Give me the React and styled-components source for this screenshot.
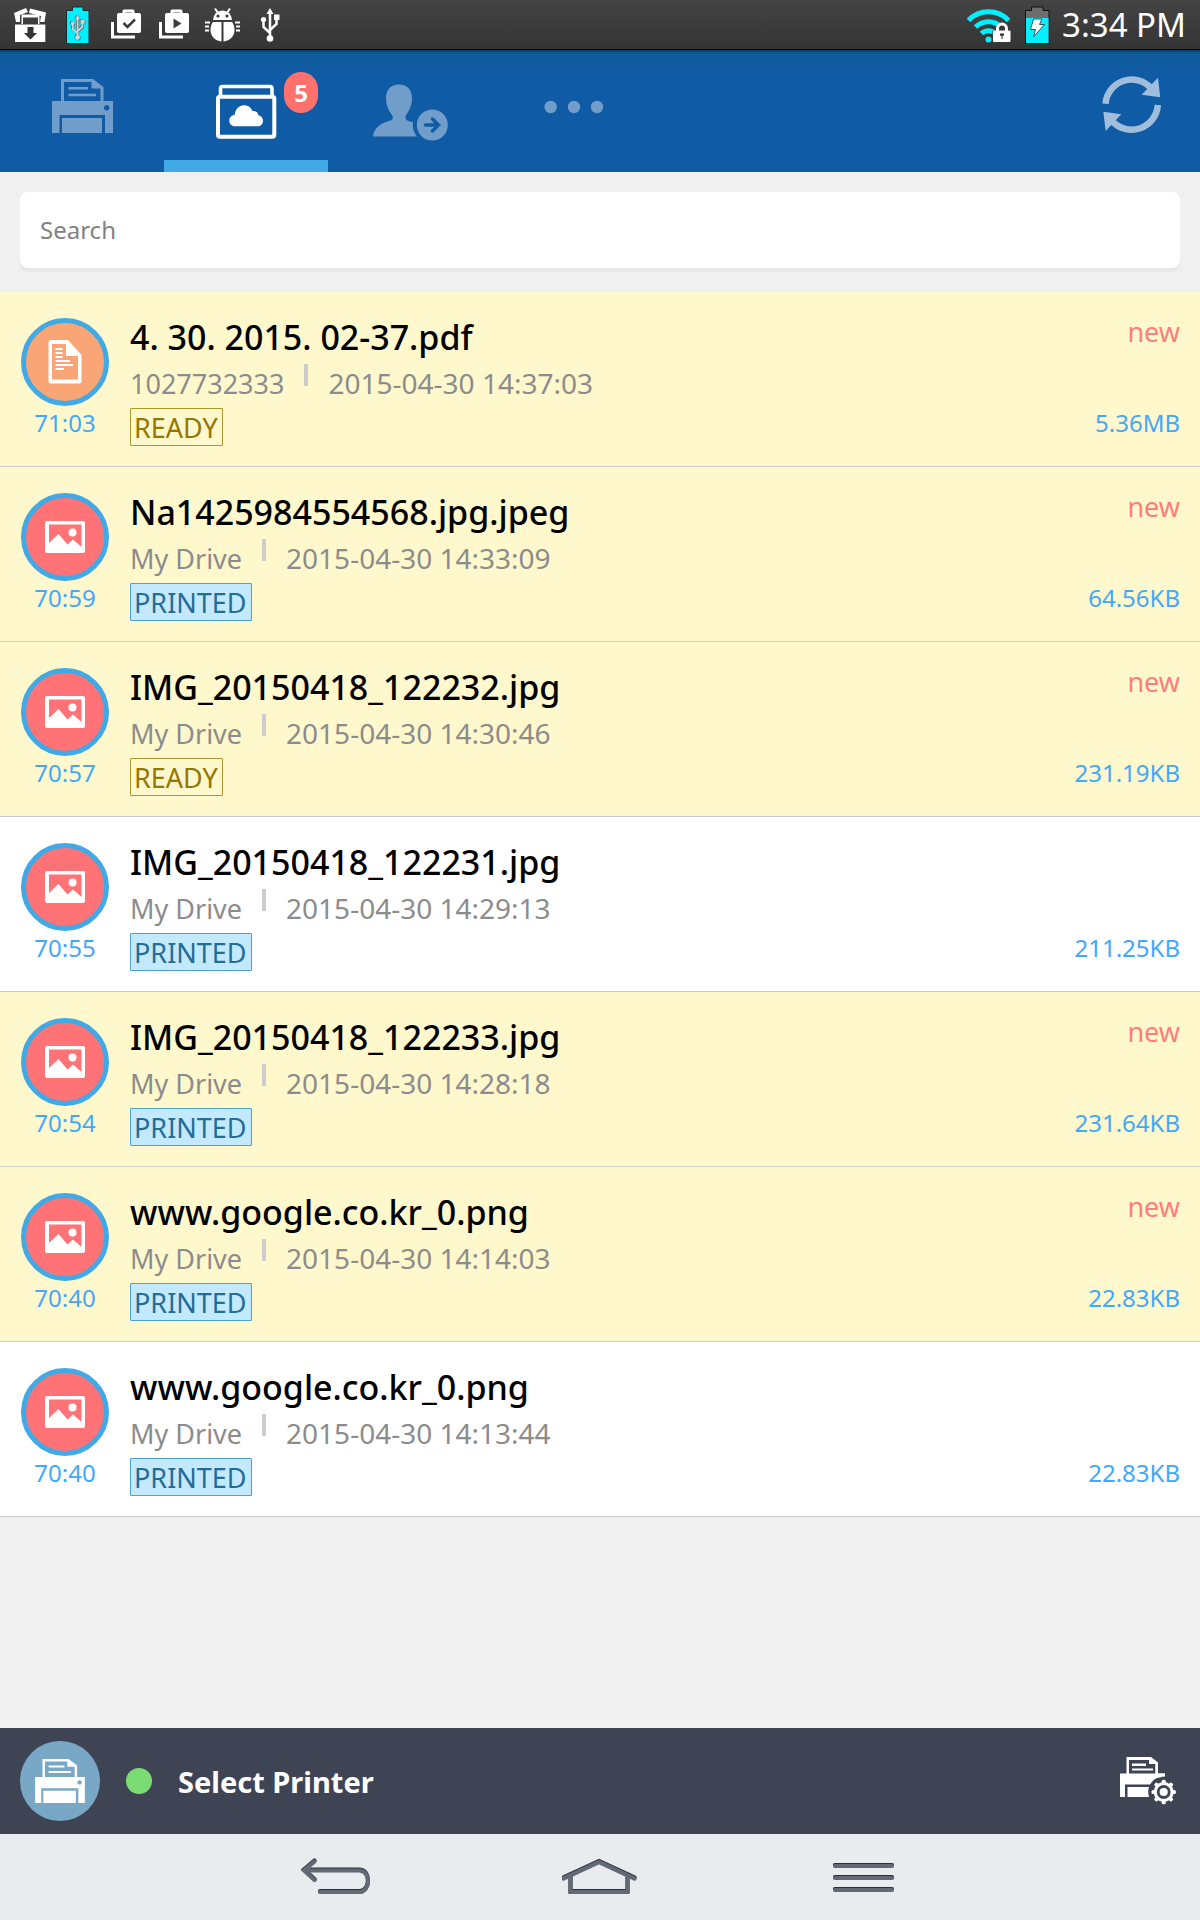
import styled, { createGlobalStyle } from "styled-components";

const GlobalStyle = createGlobalStyle`
  * {
    box-sizing: border-box;
  }
  body {
    margin: 0;
    background: #f0f0f0;
    font-family: "Noto Sans", "Open Sans", sans-serif;
  }
  button {
    padding: 0;
    border: none;
    background: none;
    font-family: inherit;
    cursor: pointer;
  }
  svg {
    display: block;
  }
`;

const Page = styled.div`
  display: flex;
  flex-direction: column;
  min-height: 100vh;
`;

const StatusBar = styled.div`
  display: flex;
  justify-content: space-between;
  align-items: flex-start;
  height: 50px;
  padding: 0 14px 0 6px;
  background: linear-gradient(#444444, #343434);
  border-bottom: 1px solid #000000;
  color: #ffffff;
`;

const StatusGroup = styled.div`
  display: flex;
  gap: ${(props) => props.$gap || 0};
`;

const Clock = styled.time`
  font-size: 33px;
  line-height: 50px;
`;

const Header = styled.header`
  display: flex;
  justify-content: space-between;
  height: 122px;
  background: linear-gradient(#0b3f70, #105a9c 4px, #105ba5 24px);
`;

const Tabs = styled.nav`
  display: flex;
`;

const Tab = styled.button`
  position: relative;
  display: flex;
  align-items: center;
  justify-content: center;
  width: 164px;
  padding-top: 2px;
  color: ${(props) => (props.$active ? "#ffffff" : "#709dc9")};
  box-shadow: ${(props) => (props.$active ? "inset 0 -12px #40a9e6" : "none")};
`;

const Count = styled.span`
  position: absolute;
  top: 22px;
  right: 10px;
  width: 34px;
  border-radius: 17px;
  background: #ff716c;
  color: #ffffff;
  font-size: 24px;
  font-weight: 700;
  line-height: 41px;
  text-align: center;
`;

const RefreshButton = styled.button`
  padding: 0 38px 12px;
  color: #a0bedb;
`;

const SearchArea = styled.div`
  padding: 20px 20px 24px;
`;

const SearchInput = styled.input`
  display: block;
  width: 100%;
  height: 76px;
  padding: 0 20px 2px;
  border: none;
  border-radius: 8px;
  outline: none;
  background: #ffffff;
  box-shadow: 0 4px #e8e8e8;
  color: #000000;
  font-family: inherit;
  font-size: 24px;
  &::placeholder {
    color: #828282;
    opacity: 1;
  }
`;

const List = styled.ul`
  flex: 1;
  margin: 0;
  padding: 0;
  list-style: none;
`;

const Row = styled.li`
  display: flex;
  gap: 20px;
  padding: 0 20px;
  border-bottom: 1px solid #cccccc;
  background: ${(props) => (props.$unread ? "#fff8cc" : "#ffffff")};
`;

const AvatarColumn = styled.div`
  display: flex;
  flex-direction: column;
  align-items: center;
  gap: 2px;
  width: 90px;
  padding-top: 26px;
`;

const Avatar = styled.div`
  display: flex;
  align-items: center;
  justify-content: center;
  width: 88px;
  height: 88px;
  border: 5px solid #40a9e6;
  border-radius: 50%;
  background: ${(props) => (props.$type === "doc" ? "#f9a575" : "#ff7376")};
`;

const BlueText = styled.span`
  color: #42a8fa;
  font-size: 24px;
  line-height: 30px;
`;

const Info = styled.div`
  flex: 1;
  min-width: 0;
  padding: 22px 0 20px;
`;

const FileName = styled.h2`
  margin: 0 0 4px;
  color: #000000;
  font-size: 34px;
  font-weight: 500;
  line-height: 46px;
`;

const Meta = styled.div`
  display: flex;
  align-items: baseline;
  height: 38px;
  margin-bottom: 6px;
  color: #8c8c8c;
  font-size: 28px;
  line-height: 38px;
`;

const Owner = styled.span`
  font-size: 27px;
`;

const Separator = styled.span`
  align-self: flex-start;
  width: 4px;
  height: 22px;
  margin: 0 20px;
  background: #cccccc;
`;

const Status = styled.span`
  display: block;
  width: fit-content;
  padding: 2px 4px 0 3px;
  border: 1px solid ${(props) => (props.$printed ? "#4ba3d3" : "#ad9428")};
  border-radius: 1px;
  background: ${(props) => (props.$printed ? "#c3e9ff" : "#fff8cc")};
  color: ${(props) => (props.$printed ? "#236d99" : "#957600")};
  font-size: 27px;
  line-height: 34px;
`;

const Side = styled.div`
  display: flex;
  flex-direction: column;
  align-items: flex-end;
  justify-content: space-between;
  padding: 22px 0 28px;
`;

const NewLabel = styled.span`
  color: #ff7d7d;
  font-size: 27px;
  line-height: 36px;
`;

const Footer = styled.footer`
  display: flex;
  align-items: center;
  justify-content: space-between;
  height: 106px;
  padding: 0 24px 0 20px;
  background: #3f4454;
  color: #ffffff;
`;

const PrinterButton = styled.button`
  display: flex;
  align-items: center;
  gap: 26px;
  color: #ffffff;
  font-size: 29px;
  font-weight: 700;
`;

const PrinterBadge = styled.span`
  display: flex;
  align-items: center;
  justify-content: center;
  width: 80px;
  height: 80px;
  border-radius: 50%;
  background: #78a8c6;
`;

const OnlineDot = styled.span`
  width: 26px;
  height: 26px;
  border-radius: 50%;
  background: #7adc72;
`;

const SettingsButton = styled.button`
  color: #ffffff;
`;

const SystemNav = styled.nav`
  display: flex;
  justify-content: center;
  height: 86px;
  background: #e8ecef;
`;

const SystemButton = styled.button`
  display: flex;
  align-items: center;
  justify-content: center;
  width: 22%;
  color: #636975;
`;

const DownloadBoxIcon = () => (
  <svg width="48" height="48" viewBox="0 0 48 48" fill="#fff">
    <path d="M8 13L20 8L22 12L14 15V22H10Z" />
    <path d="M24 8.500L40 12.500L38.500 22H34L35 16L23 13Z" />
    <path d="M15.500 14.500H33.500V24H32V17.500H17V24H15.500Z" />
    <path d="M9 24.500H39.300V42H9Z" />
    <path d="M21.500 27H27.500V33H31L24.500 39.500L18 33H21.500Z" fill="#333" />
  </svg>
);

const UsbShape = () => (
  <g fill="none" stroke="currentColor" strokeWidth="2.500">
    <path d="M24 12V37M24 33L17.500 27V20M24 30L30.500 24V18" />
    <path d="M24 8L27.500 14H20.500Z" fill="currentColor" stroke="none" />
    <circle cx="24" cy="38.500" r="3.300" fill="currentColor" stroke="none" />
    <circle cx="17.500" cy="19.500" r="2.600" fill="currentColor" stroke="none" />
    <path d="M28 14.500H33.500V20H28Z" fill="currentColor" stroke="none" />
  </g>
);

const BatteryUsbIcon = () => (
  <svg width="48" height="48" viewBox="0 0 48 48">
    <path
      d="M12.500 10.500H18.500V7H29V10.500H35V43.500H12.500Z"
      fill="#00f0ff"
      stroke="#1d2b2d"
    />
    <g transform="translate(6.500 9.500) scale(.74)" color="#3c6672">
      <UsbShape />
    </g>
    <g transform="translate(5 8.500) scale(.74)" color="#3c6672">
      <UsbShape />
    </g>
    <g transform="translate(5.800 9) scale(.74)" color="#c9d6da">
      <UsbShape />
    </g>
  </svg>
);

const BagIcon = ({ children }) => (
  <svg width="48" height="48" viewBox="0 0 48 48" fill="none">
    <path d="M10.500 22V37H33" stroke="#fff" strokeWidth="3" />
    <path d="M22 14V11H31V14" stroke="#fff" strokeWidth="3" strokeLinejoin="round" />
    <rect x="15" y="13" width="24" height="20" rx="2" fill="#fff" />
    {children}
  </svg>
);

const BugIcon = () => (
  <svg width="48" height="48" viewBox="0 0 48 48" fill="#fff">
    <path d="M15 20A9.500 9.500 0 0 1 34 20Z" />
    <path d="M17 8.500L20 13M32 8.500L29 13" stroke="#fff" strokeWidth="2" />
    <circle cx="20" cy="16" r="1.600" fill="#3c3c3c" />
    <circle cx="29" cy="16" r="1.600" fill="#3c3c3c" />
    <path d="M23.500 22V41.500C17 41 12.500 36 12.500 30C12.500 26.500 13.500 24 15 22Z" />
    <path d="M25.500 22V41.500C32 41 36.500 36 36.500 30C36.500 26.500 35.500 24 34 22Z" />
    <path
      d="M7 22.500H12M7 26.500H11M7 30.500H11M37 22.500H42M38 26.500H42M38 30.500H42"
      stroke="#fff"
      strokeWidth="2"
    />
  </svg>
);

const UsbIcon = () => (
  <svg width="48" height="48" viewBox="0 0 48 48" color="#fff">
    <UsbShape />
  </svg>
);

const WifiIcon = () => (
  <svg width="48" height="48" viewBox="0 0 48 48" fill="none">
    <g stroke="#00f0ff" strokeWidth="5">
      <path d="M4.500 20.500A27.500 27.500 0 0 1 44.500 20.500" />
      <path d="M11.500 27A18.500 18.500 0 0 1 37.500 27" />
      <path d="M17.500 33.500A10 10 0 0 1 31.500 33.500" />
    </g>
    <circle cx="24.500" cy="39.500" r="3" fill="#00f0ff" />
    <path d="M28.500 30.500V42.500H47V29L43 24H35L32 27V30.500Z" fill="#3a3a3a" />
    <path d="M33.500 32V28.500A4.500 4.500 0 0 1 42.500 28.500V32" stroke="#fff" strokeWidth="3" />
    <rect x="29" y="30.500" width="17.500" height="11.500" rx="1" fill="#fff" />
    <path d="M36 33.500H40V35.500L38.500 36V39H37.500V36L36 35.500Z" fill="#333" />
  </svg>
);

const BatteryChargeIcon = () => (
  <svg width="26" height="48" viewBox="0 0 26 48">
    <path d="M1.500 10.500H7.500V7H19V10.500H25V43.500H1.500Z" fill="#6e6e6e" stroke="#111" />
    <path d="M2 18H24.500V43H2Z" fill="#00f0ff" />
    <path
      d="M9.500 19H18L15.500 24.500H20.500L9.500 37L11.500 29.500H6.500Z"
      fill="#fff"
      stroke="#235a60"
      strokeWidth="1"
    />
  </svg>
);

const PrinterShape = () => (
  <g fill="currentColor">
    <path
      fillRule="evenodd"
      d="M9 0H41L51.500 8V22H61V54H53V36H7.500V54H0V22H9ZM12 3V22H48.500V9.500H39.500V3Z"
    />
    <path d="M16.500 8H36V10.500H16.500ZM16.500 14.700H44V17.200H16.500ZM10 39H50V54H10Z" />
  </g>
);

const PrinterIcon = ({ width, height, hole }) => (
  <svg width={width} height={height} viewBox="0 0 61 54">
    <PrinterShape />
    <circle cx="54.500" cy="28.700" r="2.700" fill={hole} />
  </svg>
);

const PrintTabIcon = () => (
  <svg width="76" height="66" viewBox="0 0 76 66">
    <g transform="translate(8 0)">
      <PrinterShape />
      <circle cx="54.700" cy="28.700" r="2.700" fill="#105ba5" />
    </g>
  </svg>
);

const CloudTabIcon = () => (
  <svg width="76" height="66" viewBox="0 0 76 66" fill="none" stroke="currentColor">
    <path d="M12.500 17V9.500Q12.500 7.500 14.500 7.500H62Q64 7.500 64 9.500V17" strokeWidth="3.600" />
    <rect x="10" y="17.800" width="56.300" height="40" rx="2" strokeWidth="4" />
    <path
      d="M27 47.300C23.500 47.300 21.300 44.800 21.300 41.500C21.300 38.500 23.500 36.200 26.800 35.800C27 30.500 31 26.200 36 26.200C40.500 26.200 43 28.500 44.500 32C48 31.500 50 33.300 50.300 36.200C53.500 37 55 39.200 55 41.700C55 45 52.800 47.300 49.500 47.300Z"
      fill="currentColor"
      stroke="none"
    />
  </svg>
);

const ShareTabIcon = () => (
  <svg width="76" height="66" viewBox="0 0 76 66" fill="currentColor">
    <path d="M27 5.500C35 5.500 40 10.500 40 19C40 26.500 37.500 31 33.500 37C33 40.500 35 42.500 41 43C40.500 49.500 42 53.500 45 57.500H1C2 49.500 8 44 17 42C20.500 41 21.500 39.500 20.500 37C16.500 31 14 26.500 14 19C14 10.500 19 5.500 27 5.500Z" />
    <circle cx="60.300" cy="46" r="15.500" />
    <path
      d="M53.500 46H66.500M60.500 40L66.500 46L60.500 52"
      fill="none"
      stroke="#105ba5"
      strokeWidth="3.500"
      strokeLinecap="round"
    />
  </svg>
);

const MoreTabIcon = () => (
  <svg width="76" height="66" viewBox="0 0 76 66" fill="currentColor">
    <circle cx="14.700" cy="28" r="6.200" />
    <circle cx="38" cy="28" r="6.200" />
    <circle cx="61" cy="28" r="6.200" />
  </svg>
);

const RefreshIcon = () => (
  <svg width="60" height="62" viewBox="0 0 60 62" fill="none">
    <g stroke="currentColor" strokeWidth="6.500">
      <path d="M3.500 29.700A26.300 26.300 0 0 1 49 14" />
      <path d="M55.800 31A26.300 26.300 0 0 1 10 47" />
    </g>
    <path
      d="M56 3.700L58.200 23.300L39.700 20.700ZM1.300 37.700L19.300 40.300L3.700 57Z"
      fill="currentColor"
    />
  </svg>
);

const DocIcon = () => (
  <svg width="34" height="44" viewBox="0 0 34 44" fill="#fff">
    <path
      fillRule="evenodd"
      d="M3 0H20L33.500 15V41Q33.500 43.500 31 43.500H3Q.500 43.500 .500 41V2.500Q.500 0 3 0ZM4 4V39.500H30V16H18V4Z"
    />
    <path d="M7.500 8H14.500V10H7.500ZM7.500 12H14.500V14H7.500ZM7.500 16H14.500V18H7.500ZM7.500 20H22V22H7.500ZM7.500 24H25V26H7.500ZM7.500 28H16V30H7.500Z" />
  </svg>
);

const ImageIcon = () => (
  <svg width="40" height="32" viewBox="0 0 40 32" fill="#fff">
    <path
      fillRule="evenodd"
      d="M2 0H38Q40 0 40 2V30Q40 32 38 32H2Q0 32 0 30V2Q0 0 2 0ZM4 3.500V22L13.500 13L22.500 23.500L28 18.500L36.500 26V3.500Z"
    />
    <circle cx="27.500" cy="11.500" r="4" />
  </svg>
);

// eight teeth, every 45 degrees
const teeth = [0, 45, 90, 135, 180, 225, 270, 315];

const PrinterSettingsIcon = () => (
  <svg width="56" height="48" viewBox="0 0 56 48" fill="currentColor">
    <path
      fillRule="evenodd"
      d="M6.500 0H31L38 5.500V16.500H45V40H5.500V27.500H5V40H0V16.500H6.500ZM9 3V16.500H35.500V7H29V3Z"
    />
    <path d="M12 6.500H26V9H12ZM12 11.500H33V13.500H12Z" />
    <path d="M5 27.500H36V30H7.500V40H5Z" fill="#3f4454" />
    <circle cx="43.700" cy="35" r="15.500" fill="#3f4454" />
    <path d="M35.500 7H38V16.500H45V18.500L40 20.500H34L35.500 16.500Z" />
    <circle cx="43.700" cy="35" r="10" />
    {teeth.map((angle) => (
      <rect
        key={angle}
        x="41.700"
        y="22.800"
        width="4"
        height="5"
        rx="1.500"
        transform={`rotate(${angle} 43.700 35)`}
      />
    ))}
    <circle cx="43.700" cy="35" r="5.500" stroke="#3f4454" strokeWidth="2.800" />
  </svg>
);

const BackIcon = () => (
  <svg width="70" height="40" viewBox="0 0 70 40" fill="none" strokeLinecap="round">
    {[
      ["#2c2f35", 0],
      ["currentColor", 1],
    ].map(([color, y]) => (
      <path
        key={color}
        d="M13.500 3.500L3 12.500L13.500 22M4 12.500H58C70 12.500 70 34 58 34H19"
        transform={`translate(0 ${y})`}
        stroke={color}
        strokeWidth="4.200"
      />
    ))}
  </svg>
);

const HomeIcon = () => (
  <svg width="76" height="40" viewBox="0 0 76 40" fill="none" strokeLinecap="round">
    {[
      ["#2c2f35", 0],
      ["currentColor", 1],
    ].map(([color, y]) => (
      <path
        key={color}
        d="M2.500 20.500L38 4L73.500 20.500M9.500 19V34H66.500V19"
        transform={`translate(-1 ${y})`}
        stroke={color}
        strokeWidth="4.200"
      />
    ))}
  </svg>
);

const MenuIcon = () => (
  <svg width="62" height="40" viewBox="0 0 62 40" fill="none" strokeLinecap="round">
    {[
      ["#2c2f35", 0],
      ["currentColor", 1],
    ].map(([color, y]) => (
      <path
        key={color}
        d="M2 8H59M2 20H59M2 32H59"
        transform={`translate(0 ${y})`}
        stroke={color}
        strokeWidth="4.200"
      />
    ))}
  </svg>
);

const files = [
  {
    type: "doc",
    left: "71:03",
    name: "4. 30. 2015. 02-37.pdf",
    owner: "1027732333",
    date: "2015-04-30 14:37:03",
    printed: false,
    unread: true,
    size: "5.36MB",
  },
  {
    type: "image",
    left: "70:59",
    name: "Na1425984554568.jpg.jpeg",
    owner: "My Drive",
    date: "2015-04-30 14:33:09",
    printed: true,
    unread: true,
    size: "64.56KB",
  },
  {
    type: "image",
    left: "70:57",
    name: "IMG_20150418_122232.jpg",
    owner: "My Drive",
    date: "2015-04-30 14:30:46",
    printed: false,
    unread: true,
    size: "231.19KB",
  },
  {
    type: "image",
    left: "70:55",
    name: "IMG_20150418_122231.jpg",
    owner: "My Drive",
    date: "2015-04-30 14:29:13",
    printed: true,
    unread: false,
    size: "211.25KB",
  },
  {
    type: "image",
    left: "70:54",
    name: "IMG_20150418_122233.jpg",
    owner: "My Drive",
    date: "2015-04-30 14:28:18",
    printed: true,
    unread: true,
    size: "231.64KB",
  },
  {
    type: "image",
    left: "70:40",
    name: "www.google.co.kr_0.png",
    owner: "My Drive",
    date: "2015-04-30 14:14:03",
    printed: true,
    unread: true,
    size: "22.83KB",
  },
  {
    type: "image",
    left: "70:40",
    name: "www.google.co.kr_0.png",
    owner: "My Drive",
    date: "2015-04-30 14:13:44",
    printed: true,
    unread: false,
    size: "22.83KB",
  },
];

const FileRow = ({ file }) => (
  <Row $unread={file.unread}>
    <AvatarColumn>
      <Avatar $type={file.type}>
        {file.type === "doc" ? <DocIcon /> : <ImageIcon />}
      </Avatar>
      <BlueText>{file.left}</BlueText>
    </AvatarColumn>
    <Info>
      <FileName>{file.name}</FileName>
      <Meta>
        <Owner>{file.owner}</Owner>
        <Separator />
        <span>{file.date}</span>
      </Meta>
      <Status $printed={file.printed}>{file.printed ? "PRINTED" : "READY"}</Status>
    </Info>
    <Side>
      {file.unread ? <NewLabel>new</NewLabel> : <span />}
      <BlueText>{file.size}</BlueText>
    </Side>
  </Row>
);

const App = () => (
  <Page>
    <GlobalStyle />
    <StatusBar>
      <StatusGroup>
        <DownloadBoxIcon />
        <BatteryUsbIcon />
        <BagIcon>
          <path d="M21.500 23L25.500 27L33 19.500" stroke="#3c3c3c" strokeWidth="2.500" />
        </BagIcon>
        <BagIcon>
          <path d="M23.500 18.500L31.500 23.500L23.500 28.500Z" fill="#3c3c3c" />
        </BagIcon>
        <BugIcon />
        <UsbIcon />
      </StatusGroup>
      <StatusGroup $gap="12px">
        <WifiIcon />
        <BatteryChargeIcon />
        <Clock>3:34 PM</Clock>
      </StatusGroup>
    </StatusBar>
    <Header>
      <Tabs>
        <Tab aria-label="Print">
          <PrintTabIcon />
        </Tab>
        <Tab aria-label="Cloud files" $active>
          <CloudTabIcon />
          <Count>5</Count>
        </Tab>
        <Tab aria-label="Share">
          <ShareTabIcon />
        </Tab>
        <Tab aria-label="More">
          <MoreTabIcon />
        </Tab>
      </Tabs>
      <RefreshButton aria-label="Refresh">
        <RefreshIcon />
      </RefreshButton>
    </Header>
    <SearchArea>
      <SearchInput type="text" placeholder="Search" aria-label="Search" />
    </SearchArea>
    <List>
      {files.map((file) => (
        <FileRow key={file.date} file={file} />
      ))}
    </List>
    <Footer>
      <PrinterButton>
        <PrinterBadge>
          <PrinterIcon width="50" height="44" hole="#78a8c6" />
        </PrinterBadge>
        <OnlineDot />
        Select Printer
      </PrinterButton>
      <SettingsButton aria-label="Printer settings">
        <PrinterSettingsIcon />
      </SettingsButton>
    </Footer>
    <SystemNav>
      <SystemButton aria-label="Back">
        <BackIcon />
      </SystemButton>
      <SystemButton aria-label="Home">
        <HomeIcon />
      </SystemButton>
      <SystemButton aria-label="Menu">
        <MenuIcon />
      </SystemButton>
    </SystemNav>
  </Page>
);

export default App;
